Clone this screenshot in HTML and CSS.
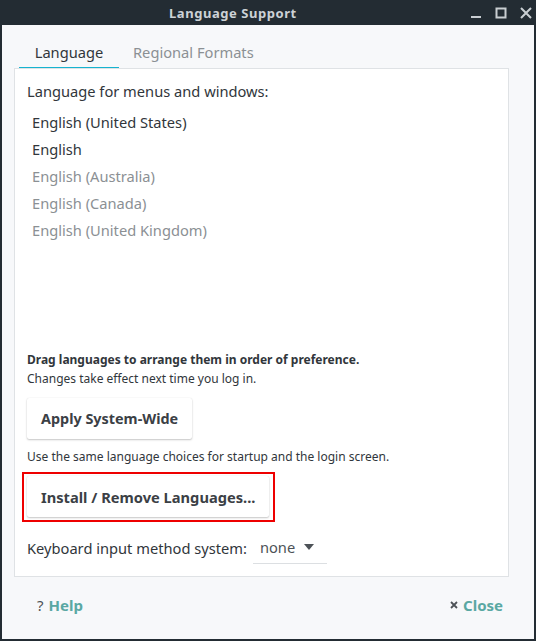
FILE: index.html
```html
<!DOCTYPE html>
<html>
<head>
<meta charset="utf-8">
<link rel="stylesheet" href="styles.css">
</head>
<body>
<div class="window">
  <div class="titlebar">
    <div class="title">Language Support</div>
    <div class="controls">
      <svg class="ctl" width="12" height="12" viewBox="0 0 12 12"><rect x="1" y="9" width="10" height="2" fill="#c9ced2"/></svg>
      <svg class="ctl" width="12" height="12" viewBox="0 0 12 12"><rect x="1.5" y="1.5" width="9" height="9" fill="none" stroke="#c9ced2" stroke-width="2"/></svg>
      <svg class="ctl" width="12" height="12" viewBox="0 0 12 12"><path d="M1 1 L11 11 M11 1 L1 11" stroke="#c9ced2" stroke-width="2"/></svg>
    </div>
  </div>
  <div class="body">
    <div class="tabs">
      <div class="tab active">Language</div>
      <div class="tab">Regional Formats</div>
    </div>
    <div class="frame">
      <div class="label">Language for menus and windows:</div>
      <div class="list">
        <div class="item">English (United States)</div>
        <div class="item">English</div>
        <div class="item dim">English (Australia)</div>
        <div class="item dim">English (Canada)</div>
        <div class="item dim">English (United Kingdom)</div>
      </div>
      <div class="small bold">Drag languages to arrange them in order of preference.</div>
      <div class="small">Changes take effect next time you log in.</div>
      <div class="btnrow"><button class="btn">Apply System-Wide</button></div>
      <div class="small use">Use the same language choices for startup and the login screen.</div>
      <div class="btnrow marked"><div class="mark"><button class="btn wide">Install / Remove Languages...</button></div></div>
      <div class="kbrow">
        <span class="kblabel">Keyboard input method system:</span>
        <span class="combo">none <svg width="10" height="6" viewBox="0 0 10 6"><path d="M0 0 H10 L5 6 Z" fill="#4d5257"/></svg></span>
      </div>
    </div>
    <div class="footer">
      <div class="fbtn"><span class="ficon q">?</span><span class="flabel">Help</span></div>
      <div class="fbtn"><svg class="xicon" width="8" height="8" viewBox="0 0 8 8"><path d="M1 1 L7 7 M7 1 L1 7" stroke="#4d5257" stroke-width="1.8"/></svg><span class="flabel">Close</span></div>
    </div>
  </div>
</div>
</body>
</html>
```

FILE: styles.css
```css
html, body {
  margin: 0;
  padding: 0;
  width: 536px;
  height: 641px;
  overflow: hidden;
  background: #232c33;
  font-family: "Noto Sans", sans-serif;
  color: #31363b;
}
.window {
  width: 536px;
  height: 641px;
  box-sizing: border-box;
  display: flex;
  flex-direction: column;
}
.titlebar {
  height: 25px;
  flex: none;
  display: flex;
  align-items: center;
  position: relative;
  background: #232c33;
}
.title {
  color: #cdd2d6;
  font-weight: bold;
  font-size: 13px;
  letter-spacing: 0.55px;
  margin-left: 169px;
}
.controls {
  position: absolute;
  right: 4px;
  top: 7px;
  display: flex;
  gap: 13px;
}
.ctl { display: block; }
.body {
  flex: 1;
  margin: 0 2px 2px 2px;
  background: #f7f8fa;
  display: flex;
  flex-direction: column;
  padding: 12px 25px 0 12px;
}
.tabs {
  display: flex;
  height: 32px;
  flex: none;
  padding-left: 5px;
}
.tab {
  font-size: 14.67px;
  line-height: 30px;
  color: #8b9094;
  border-bottom: 2px solid transparent;
  padding: 0 14px;
}
.tab.active {
  color: #31363b;
  border-bottom-color: #16b3cf;
  width: 100px;
  padding: 0;
  text-align: center;
  box-sizing: border-box;
}
.frame {
  height: 509px;
  box-sizing: border-box;
  border: 1px solid #dfe2e5;
  background: #ffffff;
  margin-top: -1px;
  display: flex;
  flex-direction: column;
  padding: 12px 12px 11px 12px;
}
.label {
  font-size: 14.67px;
  line-height: 20px;
}
.list {
  flex: 1;
  padding: 8px 0 0 5px;
}
.item {
  font-size: 14.67px;
  line-height: 27px;
}
.item.dim { color: #8b9094; }
.small {
  font-size: 12px;
  line-height: 19px;
}
.bold { font-weight: bold; }
.btnrow {
  display: flex;
  margin-top: 10px;
}
.use { margin-top: 8px; }
.btn {
  font-family: "Noto Sans", sans-serif;
  font-weight: bold;
  font-size: 14.4px;
  color: #3b4045;
  background: #ffffff;
  border: none;
  border-radius: 2px;
  height: 41px;
  padding: 0 14px;
  box-shadow: 0 1px 2px rgba(0,0,0,0.22), 0 0 1px rgba(0,0,0,0.12);
}
.btn.wide {
  font-size: 14.67px;
}
.btnrow.marked {
  margin-top: 6px;
  margin-left: -5px;
}
.mark {
  display: flex;
  border: 2px solid #ee0000;
  padding: 2px 4px 3px 3px;
}
.kbrow {
  display: flex;
  align-items: flex-start;
  margin-top: 9px;
  height: 34px;
}
.kblabel {
  font-size: 14.67px;
  line-height: 34px;
}
.combo {
  margin-left: 6px;
  width: 74px;
  height: 33px;
  border-bottom: 1px solid #dcdfe2;
  font-size: 14.67px;
  line-height: 34px;
  color: #4d5257;
  box-sizing: border-box;
  padding-left: 7px;
  display: flex;
  align-items: center;
  gap: 9px;
}
.footer {
  flex: 1;
  display: flex;
  justify-content: space-between;
  align-items: center;
  padding: 0 6px 6px 23px;
}
.fbtn {
  display: flex;
  align-items: center;
  gap: 5px;
}
.ficon.q {
  font-size: 15px;
  color: #4d5257;
}
.xicon { display: block; }
.flabel {
  font-weight: bold;
  font-size: 15px;
  color: #5aa8a3;
}
```
